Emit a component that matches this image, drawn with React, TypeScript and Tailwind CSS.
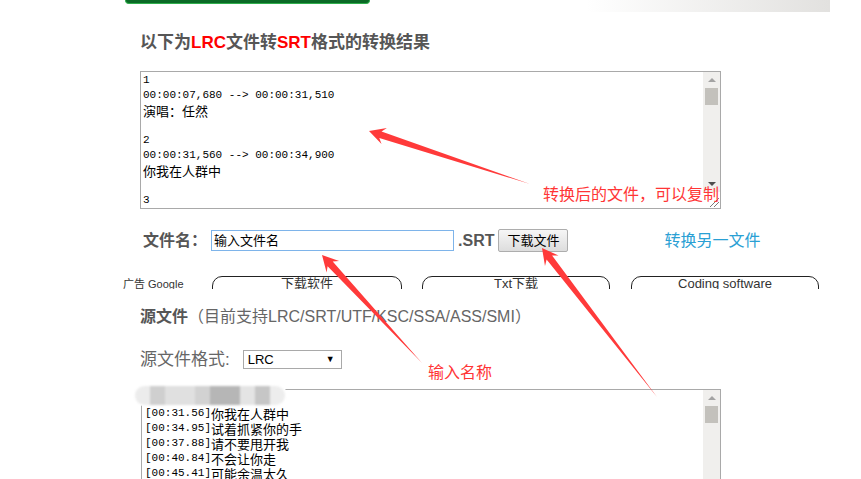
import React from 'react';

const sans = { fontFamily: '"Liberation Sans", "Noto Sans CJK SC", sans-serif' };

const resultLines = [
  '1',
  '00:00:07,680 --> 00:00:31,510',
  '演唱：任然',
  '',
  '2',
  '00:00:31,560 --> 00:00:34,900',
  '你我在人群中',
  '',
  '3',
];

const sourceLines = [
  '[00:07.68]演唱：任然',
  '[00:31.56]你我在人群中',
  '[00:34.95]试着抓紧你的手',
  '[00:37.88]请不要甩开我',
  '[00:40.84]不会让你走',
  '[00:45.41]可能余温太久',
];

// ascii in a mono face, CJK a bit larger like SimSun
const MonoLine = ({ text }: { text: string }) => {
  const parts = text.split(/([\u3000-\u9fff\uff00-\uffef]+)/).filter((p) => p !== '');
  return (
    <div className="h-[15px] flex items-center whitespace-pre">
      {parts.map((p, i) =>
        /[\u3000-\u9fff\uff00-\uffef]/.test(p) ? (
          <span key={i} className="text-[13px] leading-[15px]" style={{ fontFamily: '"Noto Sans CJK SC", sans-serif' }}>
            {p}
          </span>
        ) : (
          <span key={i} className="leading-[15px]">{p}</span>
        )
      )}
    </div>
  );
};

const ScrollBar = ({ grip }: { grip?: boolean }) => (
  <div className="w-[17px] bg-[#f0efed] flex flex-col items-center">
    <div className="h-[16px] flex items-center justify-center">
      <div className="w-0 h-0 border-x-[4px] border-x-transparent border-b-[4px] border-b-[#a3a3a3]" />
    </div>
    <div className="w-[13px] h-[17px] bg-[#c3c1bc]" />
    <div className="flex-1" />
    <div className="h-[16px] flex items-center justify-center">
      <div className="w-0 h-0 border-x-[4px] border-x-transparent border-t-[4px] border-t-[#4d4d4d]" />
    </div>
    {grip && (
      <div className="h-[16px] w-[17px] bg-white flex items-end justify-end">
        <svg width="12" height="12" viewBox="0 0 12 12">
          <line x1="2" y1="11" x2="11" y2="2" stroke="#7a7a7a" strokeWidth="1" />
          <line x1="6" y1="11" x2="11" y2="6" stroke="#7a7a7a" strokeWidth="1" />
        </svg>
      </div>
    )}
  </div>
);

function arrowPoints(tx: number, ty: number, sx: number, sy: number) {
  const dx = tx - sx;
  const dy = ty - sy;
  const len = Math.hypot(dx, dy);
  const ux = dx / len;
  const uy = dy / len;
  const nx = -uy;
  const ny = ux;
  const jx = tx - ux * 12;
  const jy = ty - uy * 12;
  const wx = tx - ux * 16;
  const wy = ty - uy * 16;
  const pts = [
    [sx, sy],
    [jx + nx * 3.5, jy + ny * 3.5],
    [wx + nx * 8.5, wy + ny * 8.5],
    [tx, ty],
    [wx - nx * 8.5, wy - ny * 8.5],
    [jx - nx * 3.5, jy - ny * 3.5],
  ];
  return pts.map((p) => `${p[0].toFixed(1)},${p[1].toFixed(1)}`).join(' ');
}

const Annotations = () => (
  <>
    <svg className="absolute left-0 top-0 pointer-events-none" width="861" height="479">
      <polygon points={arrowPoints(369, 131, 530, 184)} fill="#ff3a3a" />
      <polygon points={arrowPoints(322, 255, 422, 363)} fill="#ff3a3a" />
      <polygon points={arrowPoints(542, 248, 657, 397)} fill="#ff3a3a" />
    </svg>
    <div className="absolute left-[543px] top-[186px] text-[16px] leading-[18px] text-[#ff3535] whitespace-nowrap" style={sans}>
      转换后的文件，可以复制
    </div>
    <div className="absolute left-[428px] top-[364px] text-[16px] leading-[18px] text-[#ff3535] whitespace-nowrap" style={sans}>
      输入名称
    </div>
    {/* pixelated blur over the first line */}
    <div className="absolute left-[133px] top-[384px] w-[154px] h-[22px] bg-white rounded-full flex items-center px-[2px]">
      <div className="h-[19px] flex flex-1 overflow-hidden rounded-full blur-[1px]">
        <div className="w-[15px] bg-[#ececec]" />
        <div className="w-[15px] bg-[#cfcfcf]" />
        <div className="w-[30px] bg-[#e0e0e0]" />
        <div className="w-[15px] bg-[#d2d2d2]" />
        <div className="w-[30px] bg-[#b6b6b6]" />
        <div className="w-[15px] bg-[#e4e4e4]" />
        <div className="w-[15px] bg-[#c6c6c6]" />
        <div className="flex-1 bg-[#ededed]" />
      </div>
    </div>
  </>
);

export default function App() {
  return (
    <div className="relative w-[861px] h-[479px] overflow-hidden bg-white text-[#555]" style={sans}>
      {/* top strip */}
      <div className="h-[12px] flex items-start">
        <div className="ml-[125px] w-[245px] h-[4px] bg-[#0b6a26] border-x border-b border-[#2fae4c] rounded-b-[6px]" />
        <div className="ml-[40px] h-[3px] overflow-hidden text-[11px] leading-[6px] text-[#333] -mt-[3px]">_ , ) )</div>
        <div className="ml-auto mr-[31px] w-[243px] h-[12px] bg-gradient-to-r from-white to-[#e2e1df]" />
      </div>

      {/* title */}
      <div className="mt-[21px] pl-[140px] h-[20px] leading-[20px] text-[17px] font-bold text-[#565656]">
        以下为<span className="text-[#ff0000]">LRC</span>文件转
        <span className="text-[#ff0000]">SRT</span>格式的转换结果
      </div>

      {/* result box */}
      <div className="mt-[18px] ml-[140px] w-[581px] h-[138px] border border-[#a9a9a9] flex">
        <div className="flex-1 overflow-hidden pt-[1px] pl-[2px] text-[11px] text-black" style={{ fontFamily: '"Liberation Mono", monospace' }}>
          {resultLines.map((l, i) => (
            <MonoLine key={i} text={l} />
          ))}
        </div>
        <ScrollBar grip />
      </div>

      {/* file name row */}
      <div className="mt-[20px] h-[23px] flex items-center">
        <span className="ml-[143px] text-[16px] font-bold text-[#565656]">文件名：</span>
        <div className="ml-[4px] w-[243px] h-[21px] border border-[#7eb4ea] flex items-center pl-[2px] text-[13px] text-black">
          输入文件名
        </div>
        <span className="ml-[4px] text-[16px] font-bold text-[#565656]">.SRT</span>
        <button className="ml-[4px] w-[70px] h-[23px] border border-[#adadad] rounded-[2px] bg-gradient-to-b from-[#f6f6f6] to-[#dddddd] text-[13px] text-black leading-[20px]">
          下载文件
        </button>
        <span className="ml-[96px] text-[16px] text-[#2aa0d4]">转换另一文件</span>
      </div>

      {/* ad links */}
      <div className="mt-[24px] h-[13px] overflow-hidden flex items-start">
        <div className="ml-[123px] w-[89px] pt-[2px] text-[11px] leading-[13px] text-[#333]">广告 Google</div>
        <div className="w-[190px] h-[26px] border-[1.5px] border-[#222] rounded-[10px] text-center text-[13px] leading-[14px] text-[#333]">下载软件</div>
        <div className="ml-[20px] w-[188px] h-[26px] border-[1.5px] border-[#222] rounded-[10px] text-center text-[13px] leading-[14px] text-[#333]">Txt下载</div>
        <div className="ml-[21px] w-[188px] h-[26px] border-[1.5px] border-[#222] rounded-[10px] text-center text-[13px] leading-[14px] text-[#333]">Coding software</div>
      </div>

      {/* source heading */}
      <div className="mt-[17px] pl-[140px] h-[22px] leading-[22px] text-[16px]">
        <span className="font-bold text-[#565656]">源文件</span>
        <span className="text-[#666]">（目前支持LRC/SRT/UTF/KSC/SSA/ASS/SMI）</span>
      </div>

      {/* format select */}
      <div className="mt-[22px] h-[19px] flex items-center">
        <span className="ml-[140px] text-[17px] text-[#666]">源文件格式:</span>
        <div className="ml-[13px] w-[99px] h-[19px] border border-[#a9a9a9] flex items-center justify-between pl-[4px] pr-[6px] text-[13px] text-black">
          <span>LRC</span>
          <span className="text-[9px]">▼</span>
        </div>
      </div>

      {/* source box */}
      <div className="mt-[20px] ml-[141px] w-[580px] h-[120px] border border-[#a9a9a9] flex">
        <div className="flex-1 overflow-hidden pt-[1px] pl-[3px] text-[11px] text-black" style={{ fontFamily: '"Liberation Mono", monospace' }}>
          {sourceLines.map((l, i) => (
            <MonoLine key={i} text={l} />
          ))}
        </div>
        <ScrollBar />
      </div>

      <Annotations />
    </div>
  );
}
